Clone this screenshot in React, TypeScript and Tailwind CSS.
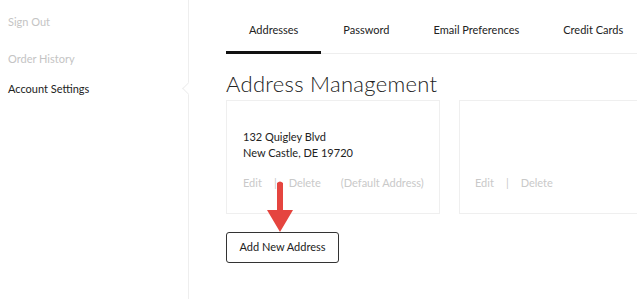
const tabs = ["Addresses", "Password", "Email Preferences", "Credit Cards"];

function AddressActions({ isDefault }: { isDefault?: boolean }) {
  return (
    <div className="flex items-center whitespace-nowrap text-[11px] text-[#c9c9c9]">
      <span>Edit</span>
      <span className="mx-[12px]">|</span>
      <span>Delete</span>
      {isDefault && <span className="ml-[20px]">(Default Address)</span>}
    </div>
  );
}

export default function App() {
  return (
    <div className="flex h-[299px] w-[637px] overflow-hidden bg-white font-['Lato',sans-serif] text-[#222]">
      <aside className="relative w-[189px] shrink-0 border-r border-[#eeeeee] pl-[8px] text-[11px]">
        <div className="pt-[14px] text-[#c4c4c4]">Sign Out</div>
        <div className="pt-[20px] text-[#c4c4c4]">Order History</div>
        <div className="pt-[14px] text-[#222]">Account Settings</div>
        <div className="absolute right-[-5px] top-[84px] h-[9px] w-[9px] rotate-45 border-b border-l border-[#eeeeee] bg-white" />
      </aside>

      <main className="relative flex-1 pl-[37px]">
        <nav className="flex h-[54px] border-b border-[#eeeeee]">
          {tabs.map((t, i) => (
            <div
              key={t}
              className={`flex items-start pt-[22px] text-[11px] whitespace-nowrap ${
                i === 0 ? "-mb-px border-b-[3px] border-[#111] px-[23px]" : "px-[22px]"
              }`}
            >
              {t}
            </div>
          ))}
        </nav>

        <h1 className="mt-[15px] text-[22px] leading-[30px] font-light tracking-[0.3px] text-[#222]">
          Address Management
        </h1>

        <div className="mt-[1px] flex gap-[19px]">
          <div className="h-[114px] w-[214px] shrink-0 border border-[#efefef] px-[16px] pt-[28px]">
            <div className="text-[11px] leading-[16px] text-[#222]">
              <div>132 Quigley Blvd</div>
              <div>New Castle, DE 19720</div>
            </div>
            <div className="mt-[14px]">
              <AddressActions isDefault />
            </div>
          </div>
          <div className="h-[114px] w-[214px] shrink-0 border border-[#efefef] px-[15px] pt-[74px]">
            <AddressActions />
          </div>
        </div>

        <button className="mt-[18px] h-[31px] w-[113px] rounded-[3px] border border-[#333] text-[11px] text-[#222]">
          Add New Address
        </button>

        <svg
          className="absolute left-[77px] top-[180px]"
          width="28"
          height="54"
          viewBox="0 0 28 54"
        >
          <path d="M11 3 Q14 0 17 3 L17 30 L27 30 L14 52 L1 30 L11 30 Z" fill="#e5453f" />
        </svg>
      </main>
    </div>
  );
}
